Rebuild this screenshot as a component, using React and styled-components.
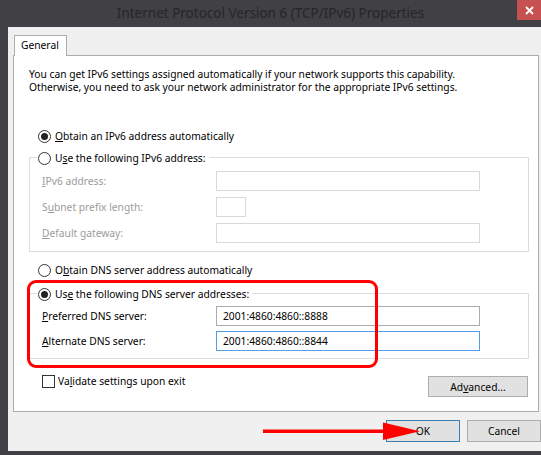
import React from 'react';
import styled, { createGlobalStyle } from 'styled-components';

const GlobalStyle = createGlobalStyle`
  html, body { margin: 0; padding: 0; background: #404045; }
  body { font-family: "Noto Sans", "Open Sans", sans-serif; font-size: 10.25px; color: #000; }
  * { box-sizing: border-box; }
`;

const Window = styled.div`
  position: relative;
  width: 541px;
  height: 455px;
  background: #404045;
  display: flex;
  flex-direction: column;
  overflow: hidden;
`;

const TitleBar = styled.div`
  height: 27px;
  flex: none;
  display: grid;
  grid-template-columns: 1fr auto 1fr;
`;

const Title = styled.div`
  grid-column: 2;
  font-size: 13.5px;
  line-height: 26px;
  color: #262628;
  white-space: nowrap;
`;

const CloseButton = styled.div`
  grid-column: 3;
  justify-self: end;
  width: 24px;
  height: 20px;
  background: #c75050;
  display: flex;
  align-items: center;
  justify-content: center;
`;

const Client = styled.div`
  position: relative;
  flex: 1;
  margin: 0 0 4px 8px;
  background: #f0f0f0;
  padding: 8px 0 0 5px;
  display: flex;
  flex-direction: column;
`;

const TabStrip = styled.div`
  display: flex;
  padding-left: 1px;
`;

const Tab = styled.div`
  position: relative;
  z-index: 1;
  width: 53px;
  height: 21px;
  margin-bottom: -1px;
  background: #fff;
  border: 1px solid #acacac;
  border-bottom: none;
  padding-left: 6px;
  line-height: 19px;
`;

const Panel = styled.div`
  position: relative;
  width: 526px;
  background: #fff;
  border: 1px solid #acacac;
  padding: 12px 9px 14px 15px;
  display: flex;
  flex-direction: column;
`;

const Intro = styled.p`
  margin: 0;
  line-height: 13px;
  white-space: nowrap;
`;

const RadioRow = styled.label`
  display: flex;
  align-items: center;
  gap: 4px;
  height: 16px;
  margin-top: ${p => p.$top || 0}px;
  margin-left: ${p => (p.$legend ? 7 : 9)}px;
  padding: ${p => (p.$legend ? '0 3px 0 1px' : '0')};
  align-self: flex-start;
  background: #fff;
  white-space: nowrap;
`;

const RadioDot = styled.span`
  flex: none;
  width: 13px;
  height: 13px;
  border: 1px solid #333;
  border-radius: 50%;
  background: #fff;
  display: flex;
  align-items: center;
  justify-content: center;
  &::after {
    content: '';
    width: 7px;
    height: 7px;
    border-radius: 50%;
    background: ${p => (p.$on ? '#222' : 'transparent')};
  }
`;

const Key = styled.span`
  text-decoration: underline;
  text-underline-offset: 1px;
`;

const Group = styled.div`
  margin-top: ${p => p.$top}px;
  border: 1px solid #dcdcdc;
  padding: 0 0 ${p => p.$bottom}px 0;
  display: flex;
  flex-direction: column;
  gap: ${p => p.$gap}px;
`;

const Legend = styled.div`
  margin-top: -8px;
  margin-bottom: -1px;
  display: flex;
`;

const FieldRow = styled.div`
  display: flex;
  align-items: center;
  padding-left: 12px;
`;

const FieldLabel = styled.span`
  width: 174px;
  color: ${p => (p.$disabled ? '#9c9c9c' : '#000')};
  white-space: nowrap;
`;

const Input = styled.div`
  width: ${p => p.$w}px;
  height: 20px;
  background: #fff;
  border: 1px solid ${p => (p.$focus ? '#569de5' : p.$disabled ? '#d9d9d9' : '#acacac')};
  padding-left: 6px;
  line-height: 18px;
`;

const Footer = styled.div`
  margin-top: 15px;
  display: flex;
  justify-content: space-between;
  align-items: flex-start;
  padding-right: 1px;
`;

const CheckRow = styled.label`
  display: flex;
  align-items: center;
  gap: 3px;
  margin-left: 13px;
  height: 14px;
`;

const CheckBox = styled.span`
  width: 13px;
  height: 13px;
  border: 1px solid #333;
  background: #fff;
`;

const Button = styled.div`
  width: ${p => p.$w}px;
  height: ${p => p.$h}px;
  margin-top: ${p => p.$top || 0}px;
  background: #e1e1e1;
  border: 1px solid ${p => (p.$default ? '#3c7fb1' : '#adadad')};
  display: flex;
  align-items: center;
  justify-content: center;
`;

const ButtonBar = styled.div`
  margin-top: 8px;
  display: flex;
  justify-content: flex-end;
  gap: 7px;
`;

/* red annotation frame around the DNS block */
const Highlight = styled.div`
  position: absolute;
  left: 13px;
  top: 224px;
  width: 351px;
  height: 88px;
  border: 3px solid #f00;
  border-radius: 9px;
  pointer-events: none;
`;

/* red pointer arrow aimed at the OK button */
const Arrow = styled.svg`
  position: absolute;
  left: 255px;
  top: 394px;
  overflow: visible;
  pointer-events: none;
`;

function Radio({ on, legend, top, children }) {
  return (
    <RadioRow $legend={legend} $top={top}>
      <RadioDot $on={on} />
      <span>{children}</span>
    </RadioRow>
  );
}

export default function App() {
  return (
    <>
      <GlobalStyle />
      <Window>
        <TitleBar>
          <Title>Internet Protocol Version 6 (TCP/IPv6) Properties</Title>
          <CloseButton>
            <svg width="9" height="9" viewBox="0 0 9 9">
              <path d="M1 1L8 8M8 1L1 8" stroke="#fff" strokeWidth="1.8" />
            </svg>
          </CloseButton>
        </TitleBar>
        <Client>
          <TabStrip>
            <Tab>General</Tab>
          </TabStrip>
          <Panel>
            <Intro>
              You can get IPv6 settings assigned automatically if your network supports this capability.
              <br />
              Otherwise, you need to ask your network administrator for the appropriate IPv6 settings.
            </Intro>

            <Radio on top={34}>
              <Key>O</Key>btain an IPv6 address automatically
            </Radio>

            <Group $top={13} $bottom={8} $gap={6}>
              <Legend>
                <Radio legend>
                  U<Key>s</Key>e the following IPv6 address:
                </Radio>
              </Legend>
              <FieldRow>
                <FieldLabel $disabled>
                  <Key>I</Key>Pv6 address:
                </FieldLabel>
                <Input $w={264} $disabled />
              </FieldRow>
              <FieldRow>
                <FieldLabel $disabled>
                  S<Key>u</Key>bnet prefix length:
                </FieldLabel>
                <Input $w={30} $disabled />
              </FieldRow>
              <FieldRow>
                <FieldLabel $disabled>
                  <Key>D</Key>efault gateway:
                </FieldLabel>
                <Input $w={264} $disabled />
              </FieldRow>
            </Group>

            <Radio top={10}>
              O<Key>b</Key>tain DNS server address automatically
            </Radio>

            <Group $top={15} $bottom={7} $gap={5}>
              <Legend>
                <Radio on legend>
                  Us<Key>e</Key> the following DNS server addresses:
                </Radio>
              </Legend>
              <FieldRow>
                <FieldLabel>
                  <Key>P</Key>referred DNS server:
                </FieldLabel>
                <Input $w={264}>2001:4860:4860::8888</Input>
              </FieldRow>
              <FieldRow>
                <FieldLabel>
                  <Key>A</Key>lternate DNS server:
                </FieldLabel>
                <Input $w={264} $focus>2001:4860:4860::8844</Input>
              </FieldRow>
            </Group>

            <Footer>
              <CheckRow>
                <CheckBox />
                <span>
                  Va<Key>l</Key>idate settings upon exit
                </span>
              </CheckRow>
              <Button $w={100} $h={21} $top={2}>
                <span>
                  Ad<Key>v</Key>anced...
                </span>
              </Button>
            </Footer>

            <Highlight />
          </Panel>

          <ButtonBar>
            <Button $w={74} $h={22} $default>OK</Button>
            <Button $w={74} $h={22}>Cancel</Button>
          </ButtonBar>

          <Arrow width="150" height="22" viewBox="0 0 150 22">
            <rect x="0" y="8.5" width="124" height="3.5" fill="#f00" />
            <polygon points="120,1.5 157,10.3 120,19" fill="#f00" />
          </Arrow>
        </Client>
      </Window>
    </>
  );
}
